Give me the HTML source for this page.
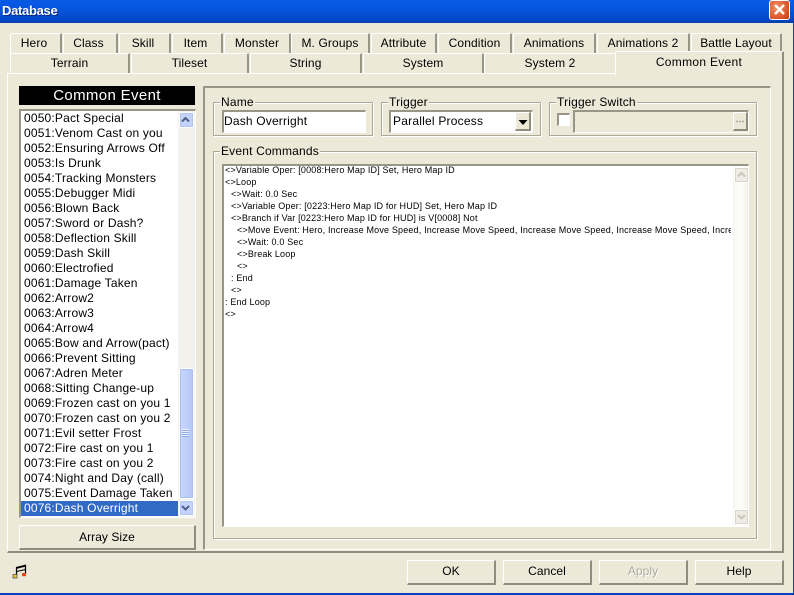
<!DOCTYPE html>
<html><head><meta charset="utf-8"><style>
html,body{margin:0;padding:0;background:#ece9d8}
#w{position:relative;width:794px;height:595px;overflow:hidden;background:#ece9d8;font:12px/15px "Liberation Sans",sans-serif;color:#000;letter-spacing:.18px}
#w div,#w svg{position:absolute;box-sizing:border-box}
.t{background:#ece9d8;text-align:center;border-top:1px solid #fff;border-left:1px solid #fff;border-right:2px solid #989686;border-top-left-radius:2px;border-top-right-radius:2px;white-space:nowrap;line-height:19px;letter-spacing:.12px}
.r{padding-right:3px}
.b{background:#ece9d8;text-align:center;border:1px solid #fff;border-right:2px solid #8f8d7e;border-bottom:2px solid #8f8d7e;line-height:21px;letter-spacing:.05px}
.g{border:1px solid #aca899;box-shadow:inset 1px 1px 0 #fff,1px 1px 0 #fff}
.l{background:#ece9d8;padding:0 1px;line-height:13px;white-space:nowrap;height:13px}
.s{border-top:2px solid #989686;border-left:2px solid #989686;border-right:1px solid #fff;border-bottom:1px solid #fff;background:#fff}
.i{left:0;width:157px;height:15px;white-space:nowrap;padding-left:3px;line-height:15px}
.c{left:1px;white-space:nowrap;font-size:9px;line-height:12px;letter-spacing:.17px;height:12px}
</style></head><body><div id="w">
<div style="left:0;top:0;width:794px;height:23px;background:linear-gradient(#0a5be0 0,#0758e6 12%,#0453d8 50%,#0347c8 85%,#0a3ea8 100%)"></div>
<div style="left:2px;top:2px;color:#fff;font-weight:bold;font-size:13px;line-height:17px;text-shadow:1px 1px 0 #0a2c80;letter-spacing:-.3px">Database</div>
<div style="left:769px;top:0;width:21px;height:20px;border:1px solid #fff;border-radius:3px;background:radial-gradient(circle at 35% 35%,#f0906a,#df5a2c 60%,#c03a12)"></div>
<svg style="left:769px;top:0" width="21" height="20"><path d="M6 5l9 9M15 5l-9 9" stroke="#fff" stroke-width="2.4"/></svg>
<div style="left:0;top:593px;width:794px;height:2px;background:#0a3fc0"></div>
<div style="left:793px;top:23px;width:1px;height:572px;background:#0a3fc0"></div>

<div class="t r" style="left:10px;top:33px;width:52px;height:21px">Hero</div>
<div class="t r" style="left:63px;top:33px;width:55px;height:21px">Class</div>
<div class="t r" style="left:119px;top:33px;width:52px;height:21px">Skill</div>
<div class="t r" style="left:172px;top:33px;width:51px;height:21px">Item</div>
<div class="t" style="left:224px;top:33px;width:67px;height:21px">Monster</div>
<div class="t" style="left:291px;top:33px;width:79px;height:21px">M. Groups</div>
<div class="t" style="left:371px;top:33px;width:66px;height:21px">Attribute</div>
<div class="t" style="left:438px;top:33px;width:74px;height:21px">Condition</div>
<div class="t" style="left:513px;top:33px;width:83px;height:21px">Animations</div>
<div class="t" style="left:597px;top:33px;width:93px;height:21px">Animations 2</div>
<div class="t" style="left:691px;top:33px;width:91px;height:21px">Battle Layout</div>

<div style="left:7px;top:73px;width:777px;height:480px;background:#ece9d8;border-top:1px solid #fff;border-left:1px solid #fff;border-right:2px solid #8f8d7e;border-bottom:2px solid #8f8d7e"></div>

<div class="t" style="left:10px;top:53px;width:120px;height:20px">Terrain</div>
<div class="t" style="left:131px;top:53px;width:118px;height:20px">Tileset</div>
<div class="t" style="left:250px;top:53px;width:112px;height:20px">String</div>
<div class="t" style="left:363px;top:53px;width:121px;height:20px">System</div>
<div class="t" style="left:484px;top:53px;width:131px;height:21px;border-right:0;border-bottom:1px solid #fff">System 2</div>
<div class="t" style="left:615px;top:51px;width:169px;height:24px;line-height:21px;border-bottom:0;letter-spacing:.3px;border-right-color:#8f8d7e">Common Event</div>

<div style="left:19px;top:86px;width:176px;height:19px;background:#000;color:#fff;text-align:center;font-size:15px;line-height:19px;letter-spacing:.35px">Common Event</div>

<div class="s" style="left:19px;top:109px;width:177px;height:409px;overflow:hidden">
<div class="i" style="top:0">0050:Pact Special</div>
<div class="i" style="top:15px">0051:Venom Cast on you</div>
<div class="i" style="top:30px">0052:Ensuring Arrows Off</div>
<div class="i" style="top:45px">0053:Is Drunk</div>
<div class="i" style="top:60px">0054:Tracking Monsters</div>
<div class="i" style="top:75px">0055:Debugger Midi</div>
<div class="i" style="top:90px">0056:Blown Back</div>
<div class="i" style="top:105px">0057:Sword or Dash?</div>
<div class="i" style="top:120px">0058:Deflection Skill</div>
<div class="i" style="top:135px">0059:Dash Skill</div>
<div class="i" style="top:150px">0060:Electrofied</div>
<div class="i" style="top:165px">0061:Damage Taken</div>
<div class="i" style="top:180px">0062:Arrow2</div>
<div class="i" style="top:195px">0063:Arrow3</div>
<div class="i" style="top:210px">0064:Arrow4</div>
<div class="i" style="top:225px">0065:Bow and Arrow(pact)</div>
<div class="i" style="top:240px">0066:Prevent Sitting</div>
<div class="i" style="top:255px">0067:Adren Meter</div>
<div class="i" style="top:270px">0068:Sitting Change-up</div>
<div class="i" style="top:285px">0069:Frozen cast on you 1</div>
<div class="i" style="top:300px">0070:Frozen cast on you 2</div>
<div class="i" style="top:315px">0071:Evil setter Frost</div>
<div class="i" style="top:330px">0072:Fire cast on you 1</div>
<div class="i" style="top:345px">0073:Fire cast on you 2</div>
<div class="i" style="top:360px">0074:Night and Day (call)</div>
<div class="i" style="top:375px">0075:Event Damage Taken</div>
<div class="i" style="top:390px;background:#316ac5;color:#fff">0076:Dash Overright</div>
<div style="left:157px;top:0;width:17px;height:406px;background:#f3f1ec"></div>
<div style="left:158px;top:1px;width:15px;height:16px;background:#c3d3fb;border:1px solid #fff;border-radius:2px;box-shadow:0 0 0 1px #b0c4f0 inset"></div>
<svg style="left:158px;top:1px" width="15" height="16"><path d="M3 9.5l3.5-3.5 3.5 3.5" fill="none" stroke="#4d6185" stroke-width="2"/></svg>
<div style="left:158px;top:257px;width:15px;height:131px;background:linear-gradient(90deg,#c9d7fb,#bccdf9 60%,#b4c6f5);border:1px solid #fff;border-radius:2px;box-shadow:0 0 0 1px #a9bdf0 inset"></div>
<svg style="left:158px;top:317px" width="15" height="10"><path d="M3 1.5h7M3 3.5h7M3 5.5h7M3 7.5h7" stroke="#eef3ff" stroke-width="1"/><path d="M3 2.5h7M3 4.5h7M3 6.5h7M3 8.5h7" stroke="#8fa8e8" stroke-width="1"/></svg>
<div style="left:158px;top:389px;width:15px;height:16px;background:#c3d3fb;border:1px solid #fff;border-radius:2px;box-shadow:0 0 0 1px #b0c4f0 inset"></div>
<svg style="left:158px;top:389px" width="15" height="16"><path d="M3 6l3.5 3.5L10 6" fill="none" stroke="#4d6185" stroke-width="2"/></svg>
</div>

<div class="b" style="left:19px;top:525px;width:177px;height:25px;line-height:22px">Array Size</div>

<div style="left:203px;top:86px;width:568px;height:464px;border-top:2px solid #989686;border-left:2px solid #989686;border-right:1px solid #fff;border-bottom:1px solid #fff"></div>

<div class="g" style="left:213px;top:102px;width:160px;height:34px"></div>
<div class="l" style="left:220px;top:96px">Name</div>
<div class="s" style="left:222px;top:110px;width:144px;height:23px;line-height:19px;white-space:nowrap">Dash Overright</div>

<div class="g" style="left:381px;top:102px;width:160px;height:34px"></div>
<div class="l" style="left:388px;top:96px">Trigger</div>
<div class="s" style="left:389px;top:110px;width:144px;height:23px;padding-left:2px;line-height:19px;white-space:nowrap;letter-spacing:.22px">Parallel Process</div>
<div class="b" style="left:515px;top:112px;width:16px;height:19px"></div>
<svg style="left:515px;top:112px" width="16" height="19"><path d="M3.5 8h9l-4.5 5z" fill="#000"/></svg>

<div class="g" style="left:549px;top:102px;width:208px;height:34px"></div>
<div class="l" style="left:556px;top:96px">Trigger Switch</div>
<div class="s" style="left:557px;top:113px;width:13px;height:13px"></div>
<div class="s" style="left:573px;top:110px;width:176px;height:23px;background:#ece9d8"></div>
<div class="b" style="left:733px;top:112px;width:15px;height:19px"></div>
<svg style="left:733px;top:112px" width="15" height="19"><path d="M3 9.5h9" stroke="#aca899" stroke-width="1.5" stroke-dasharray="2 1"/></svg>

<div class="g" style="left:213px;top:151px;width:544px;height:388px"></div>
<div class="l" style="left:220px;top:145px">Event Commands</div>
<div class="s" style="left:222px;top:164px;width:527px;height:363px;overflow:hidden">
<div class="c" style="top:-2px">&lt;&gt;Variable Oper: [0008:Hero Map ID] Set, Hero Map ID</div>
<div class="c" style="top:10px">&lt;&gt;Loop</div>
<div class="c" style="top:22px;left:7px">&lt;&gt;Wait: 0.0 Sec</div>
<div class="c" style="top:34px;left:7px">&lt;&gt;Variable Oper: [0223:Hero Map ID for HUD] Set, Hero Map ID</div>
<div class="c" style="top:46px;left:7px">&lt;&gt;Branch if Var [0223:Hero Map ID for HUD] is V[0008] Not</div>
<div class="c" style="top:58px;left:13px;width:494px;overflow:hidden">&lt;&gt;Move Event: Hero, Increase Move Speed, Increase Move Speed, Increase Move Speed, Increase Move Speed, Increase Move Speed</div>
<div class="c" style="top:70px;left:13px">&lt;&gt;Wait: 0.0 Sec</div>
<div class="c" style="top:82px;left:13px">&lt;&gt;Break Loop</div>
<div class="c" style="top:94px;left:13px">&lt;&gt;</div>
<div class="c" style="top:106px;left:7px">: End</div>
<div class="c" style="top:118px;left:7px">&lt;&gt;</div>
<div class="c" style="top:130px">: End Loop</div>
<div class="c" style="top:142px">&lt;&gt;</div>
<div style="left:509px;top:0;width:16px;height:360px;background:linear-gradient(90deg,#f7f6f1,#fdfdfb 50%,#f1efe6)"></div>
<div style="left:510px;top:1px;width:15px;height:16px;background:#eeede5;border:1px solid #fff;box-shadow:0 0 0 1px #d8d6cb inset"></div>
<svg style="left:510px;top:1px" width="15" height="16"><path d="M4 9.5l3.5-3.5 3.5 3.5" fill="none" stroke="#c8c6ba" stroke-width="2"/></svg>
<div style="left:510px;top:343px;width:15px;height:16px;background:#eeede5;border:1px solid #fff;box-shadow:0 0 0 1px #d8d6cb inset"></div>
<svg style="left:510px;top:343px" width="15" height="16"><path d="M4 6l3.5 3.5L11 6" fill="none" stroke="#c8c6ba" stroke-width="2"/></svg>
</div>

<svg style="left:12px;top:564px" width="15" height="15" viewBox="0 0 15 15"><path d="M4.5 12V3M13.5 10V1" fill="none" stroke="#000" stroke-width="1.2"/><path d="M4 3L14 .5V2.5L4 5z" fill="#000"/><path d="M4.5 7.5L13.5 5.5" fill="none" stroke="#000" stroke-width="1"/><rect x="1" y="10.5" width="4" height="3.5" fill="#f0c820" stroke="#555" stroke-width=".8"/><rect x="10" y="9" width="4" height="3.2" fill="#e8471c"/></svg>

<div class="b" style="left:407px;top:560px;width:89px;height:25px">OK</div>
<div class="b" style="left:503px;top:560px;width:89px;height:25px">Cancel</div>
<div class="b" style="left:599px;top:560px;width:89px;height:25px;color:#aca899;text-shadow:1px 1px 0 #fff">Apply</div>
<div class="b" style="left:695px;top:560px;width:89px;height:25px">Help</div>
</div></body></html>
